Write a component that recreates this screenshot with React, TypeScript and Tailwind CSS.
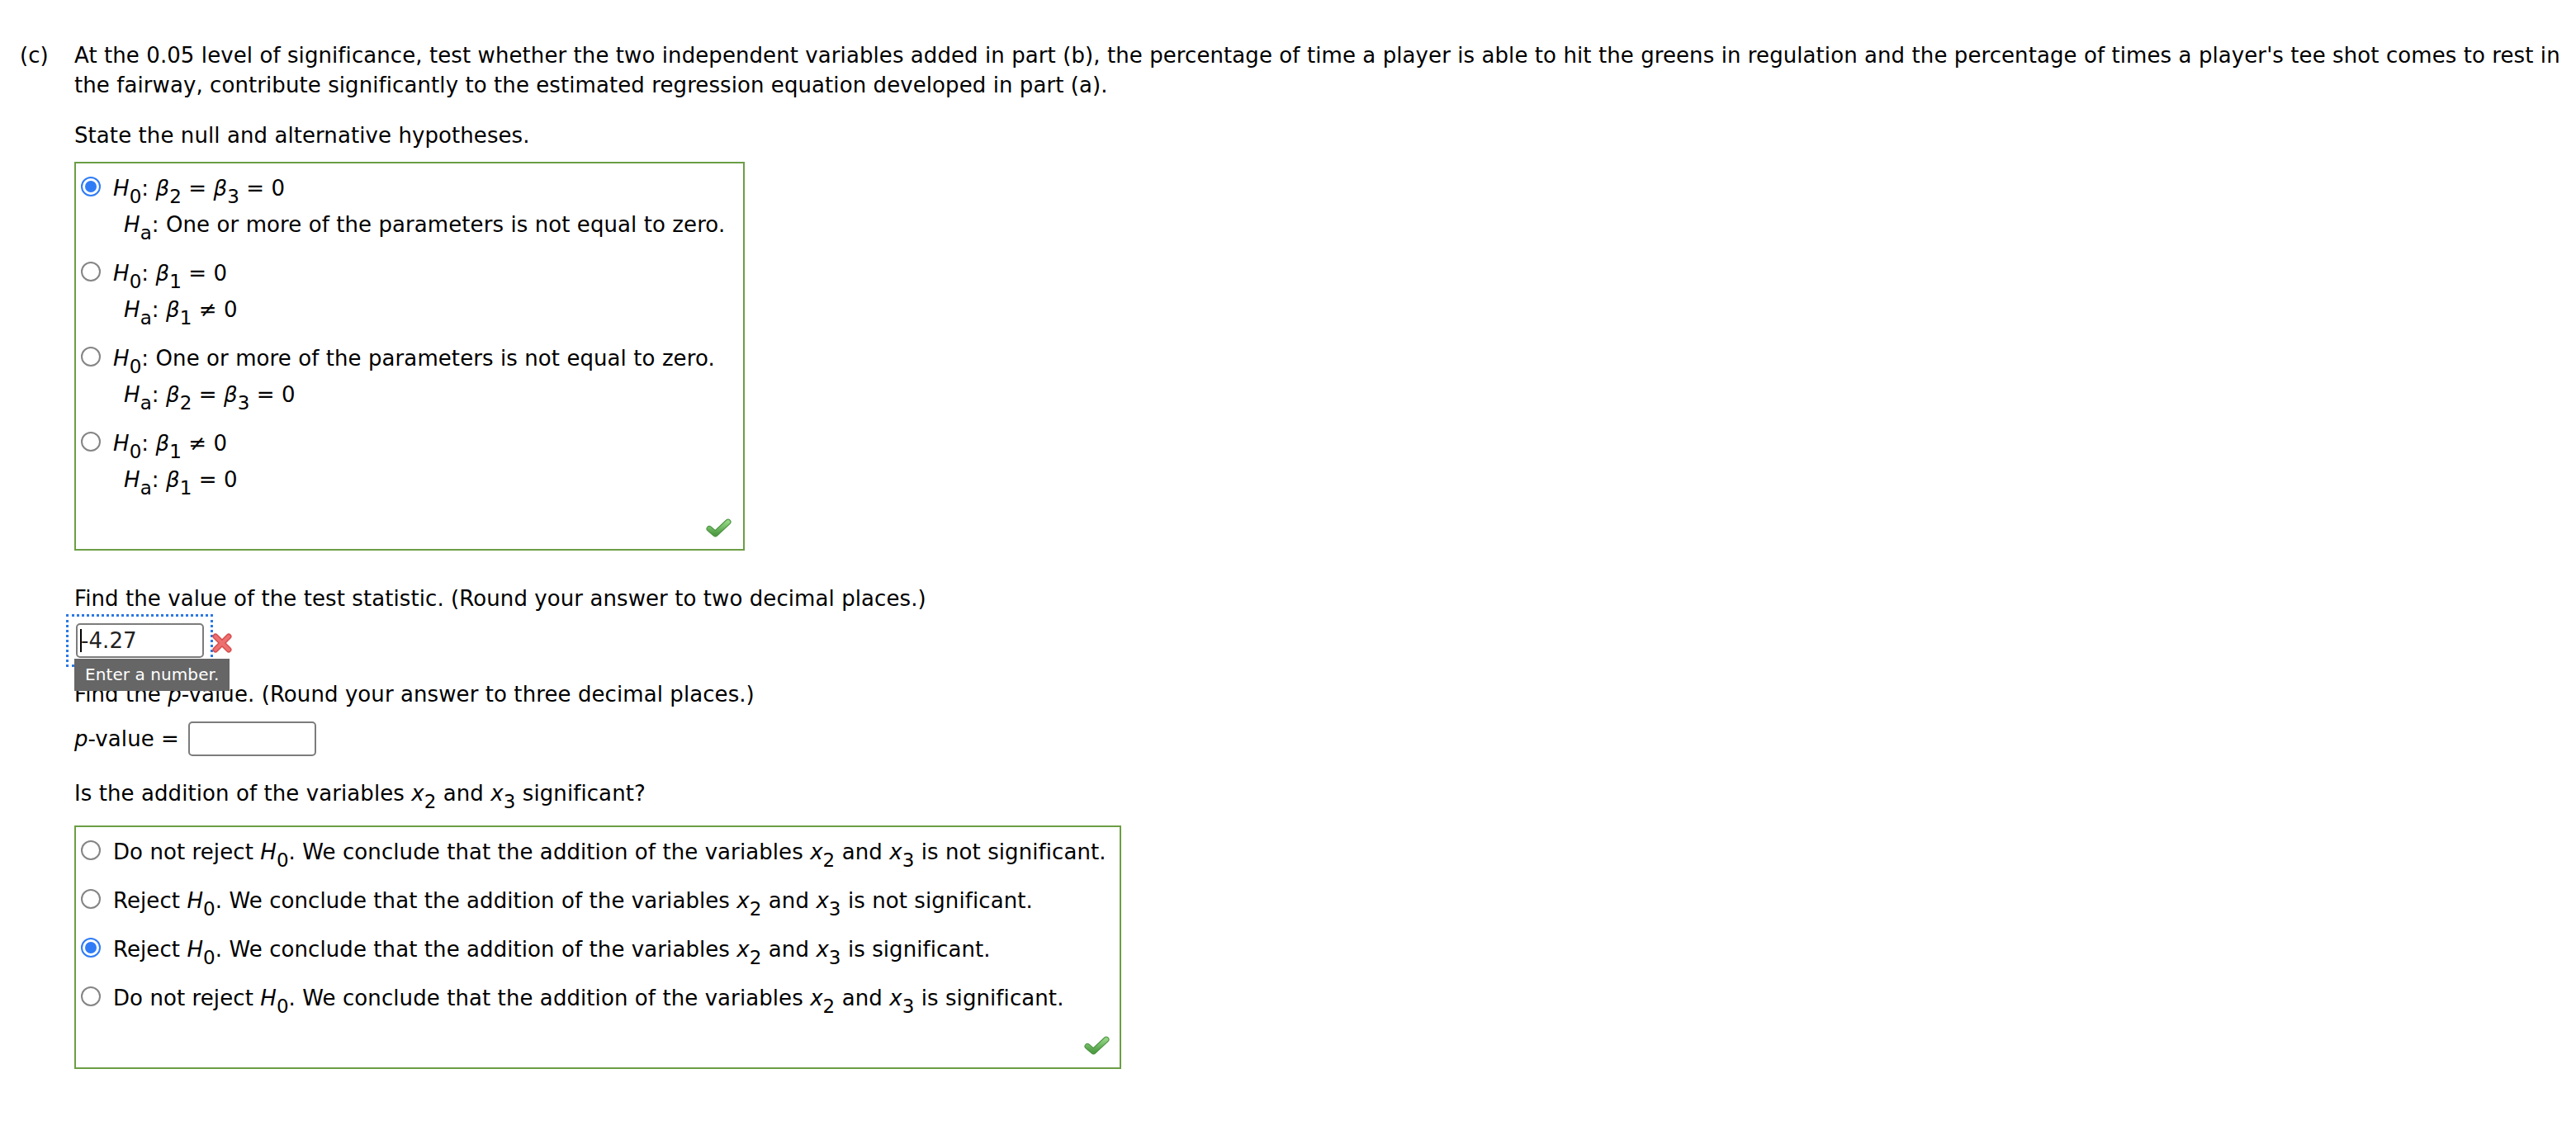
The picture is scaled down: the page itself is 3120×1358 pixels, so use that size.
import React from "react";

function Sub({ children }: { children: React.ReactNode }) {
  return <span className="align-[-9px] text-[23px] leading-[0] not-italic">{children}</span>;
}

function Radio({ checked = false }: { checked?: boolean }) {
  if (checked) {
    return (
      <span className="flex h-[24px] w-[24px] shrink-0 items-center justify-center rounded-full border-2 border-[#2f7cf6] bg-white">
        <span className="h-[14px] w-[14px] rounded-full bg-[#2f7cf6]" />
      </span>
    );
  }
  return <span className="block h-[24px] w-[24px] shrink-0 rounded-full border-2 border-[#858585] bg-white" />;
}

function Check() {
  return (
    <svg width="31" height="23" viewBox="0 0 30 22">
      <defs>
        <linearGradient id="chk" x1="0" y1="0" x2="0" y2="1">
          <stop offset="0" stopColor="#92d483" />
          <stop offset="1" stopColor="#4f9c44" />
        </linearGradient>
      </defs>
      <path d="M4 12 L11 18 L26 4" fill="none" stroke="#4a9140" strokeWidth="7" strokeLinecap="round" strokeLinejoin="round" />
      <path d="M4 12 L11 18 L26 4" fill="none" stroke="url(#chk)" strokeWidth="5" strokeLinecap="round" strokeLinejoin="round" />
    </svg>
  );
}

function Cross() {
  return (
    <svg width="26" height="26" viewBox="0 0 26 26">
      <path d="M5 5 L21 21 M21 5 L5 21" fill="none" stroke="#d94d4d" strokeWidth="7" strokeLinecap="round" />
      <path d="M5 5 L21 21 M21 5 L5 21" fill="none" stroke="#ec7070" strokeWidth="4" strokeLinecap="round" />
    </svg>
  );
}

const H = () => <span className="italic">H</span>;
const B = () => <span className="italic">β</span>;
const X = () => <span className="italic">x</span>;

function HypOption({ checked, h0, ha }: { checked?: boolean; h0: React.ReactNode; ha: React.ReactNode }) {
  return (
    <div className="flex items-start">
      <div className="mt-[8px]">
        <Radio checked={checked} />
      </div>
      <div className="ml-[15px] leading-[44px] whitespace-nowrap">
        <div>{h0}</div>
        <div className="pl-[13px]">{ha}</div>
      </div>
    </div>
  );
}

function ConcOption({ checked, children }: { checked?: boolean; children: React.ReactNode }) {
  return (
    <div className="flex items-start">
      <div className="mt-[8px]">
        <Radio checked={checked} />
      </div>
      <div className="ml-[15px] leading-[44px] whitespace-nowrap">{children}</div>
    </div>
  );
}

export default function App() {
  const x2x3 = (
    <>
      <X />
      <Sub>2</Sub> and <X />
      <Sub>3</Sub>
    </>
  );

  return (
    <div className="min-h-screen bg-white text-[26px] tracking-[0.08px] text-black font-['DejaVu_Sans',Verdana,sans-serif]">
      <div className="flex pl-[24px] pt-[49px] leading-[36px]">
        <div className="w-[66px] shrink-0">(c)</div>
        <div className="whitespace-nowrap">
          At the 0.05 level of significance, test whether the two independent variables added in part (b), the
          percentage of time a player is able to hit the greens in regulation and the percentage of times a
          player's tee shot comes to rest in
          <br />
          the fairway, contribute significantly to the estimated regression equation developed in part (a).
        </div>
      </div>

      <div className="pl-[90px]">
        <p className="mt-[25px] leading-[36px]">State the null and alternative hypotheses.</p>

        <div className="mt-[14px] w-[812px] border-2 border-[#6c9e45] pl-[6px] pt-[8px]">
          <div className="flex flex-col gap-[15px]">
            <HypOption
              checked
              h0={
                <>
                  <H />
                  <Sub>0</Sub>: <B />
                  <Sub>2</Sub> = <B />
                  <Sub>3</Sub> = 0
                </>
              }
              ha={
                <>
                  <H />
                  <Sub>a</Sub>: One or more of the parameters is not equal to zero.
                </>
              }
            />
            <HypOption
              h0={
                <>
                  <H />
                  <Sub>0</Sub>: <B />
                  <Sub>1</Sub> = 0
                </>
              }
              ha={
                <>
                  <H />
                  <Sub>a</Sub>: <B />
                  <Sub>1</Sub> ≠ 0
                </>
              }
            />
            <HypOption
              h0={
                <>
                  <H />
                  <Sub>0</Sub>: One or more of the parameters is not equal to zero.
                </>
              }
              ha={
                <>
                  <H />
                  <Sub>a</Sub>: <B />
                  <Sub>2</Sub> = <B />
                  <Sub>3</Sub> = 0
                </>
              }
            />
            <HypOption
              h0={
                <>
                  <H />
                  <Sub>0</Sub>: <B />
                  <Sub>1</Sub> ≠ 0
                </>
              }
              ha={
                <>
                  <H />
                  <Sub>a</Sub>: <B />
                  <Sub>1</Sub> = 0
                </>
              }
            />
          </div>
          <div className="flex h-[62px] items-start justify-end pr-[14px] pt-[25px]">
            <Check />
          </div>
        </div>

        <p className="mt-[40px] leading-[36px]">
          Find the value of the test statistic. (Round your answer to two decimal places.)
        </p>

        <div className="relative mt-[1px] flex items-center">
          <div className="-ml-[10px] border-[3px] border-dotted border-[#2b78e4] pb-[8px] pl-[9px] pr-[8px] pt-[8px]">
            <div className="flex h-[42px] w-[155px] items-center rounded-[5px] border-2 border-[#7c7c7c] bg-white pl-[4px] text-[#222]">
              <span>-</span>
              <span className="-ml-[10px] mr-[8px] inline-block h-[28px] w-[2px] bg-black" />
              <span>4.27</span>
            </div>
          </div>
          <div className="-ml-[2px] mt-[6px]">
            <Cross />
          </div>
          <div className="absolute left-0 top-[54px] h-[39px] bg-[#666666] px-[13px] text-[20px] leading-[39px] text-white">
            Enter a number.
          </div>
        </div>

        <p className="mt-[15px] leading-[36px]">
          Find the <span className="italic">p</span>-value. (Round your answer to three decimal places.)
        </p>

        <div className="mt-[15px] flex items-center">
          <span>
            <span className="italic">p</span>-value =
          </span>
          <div className="ml-[11px] h-[42px] w-[155px] rounded-[5px] border-2 border-[#7c7c7c] bg-white" />
        </div>

        <p className="mt-[27px] leading-[36px]">Is the addition of the variables {x2x3} significant?</p>

        <div className="mt-[21px] w-[1268px] border-2 border-[#6c9e45] pl-[6px] pt-[8px]">
          <div className="flex flex-col gap-[15px]">
            <ConcOption>
              Do not reject <H />
              <Sub>0</Sub>. We conclude that the addition of the variables {x2x3} is not significant.
            </ConcOption>
            <ConcOption>
              Reject <H />
              <Sub>0</Sub>. We conclude that the addition of the variables {x2x3} is not significant.
            </ConcOption>
            <ConcOption checked>
              Reject <H />
              <Sub>0</Sub>. We conclude that the addition of the variables {x2x3} is significant.
            </ConcOption>
            <ConcOption>
              Do not reject <H />
              <Sub>0</Sub>. We conclude that the addition of the variables {x2x3} is significant.
            </ConcOption>
          </div>
          <div className="flex h-[62px] items-start justify-end pr-[12px] pt-[24px]">
            <Check />
          </div>
        </div>
      </div>
    </div>
  );
}
